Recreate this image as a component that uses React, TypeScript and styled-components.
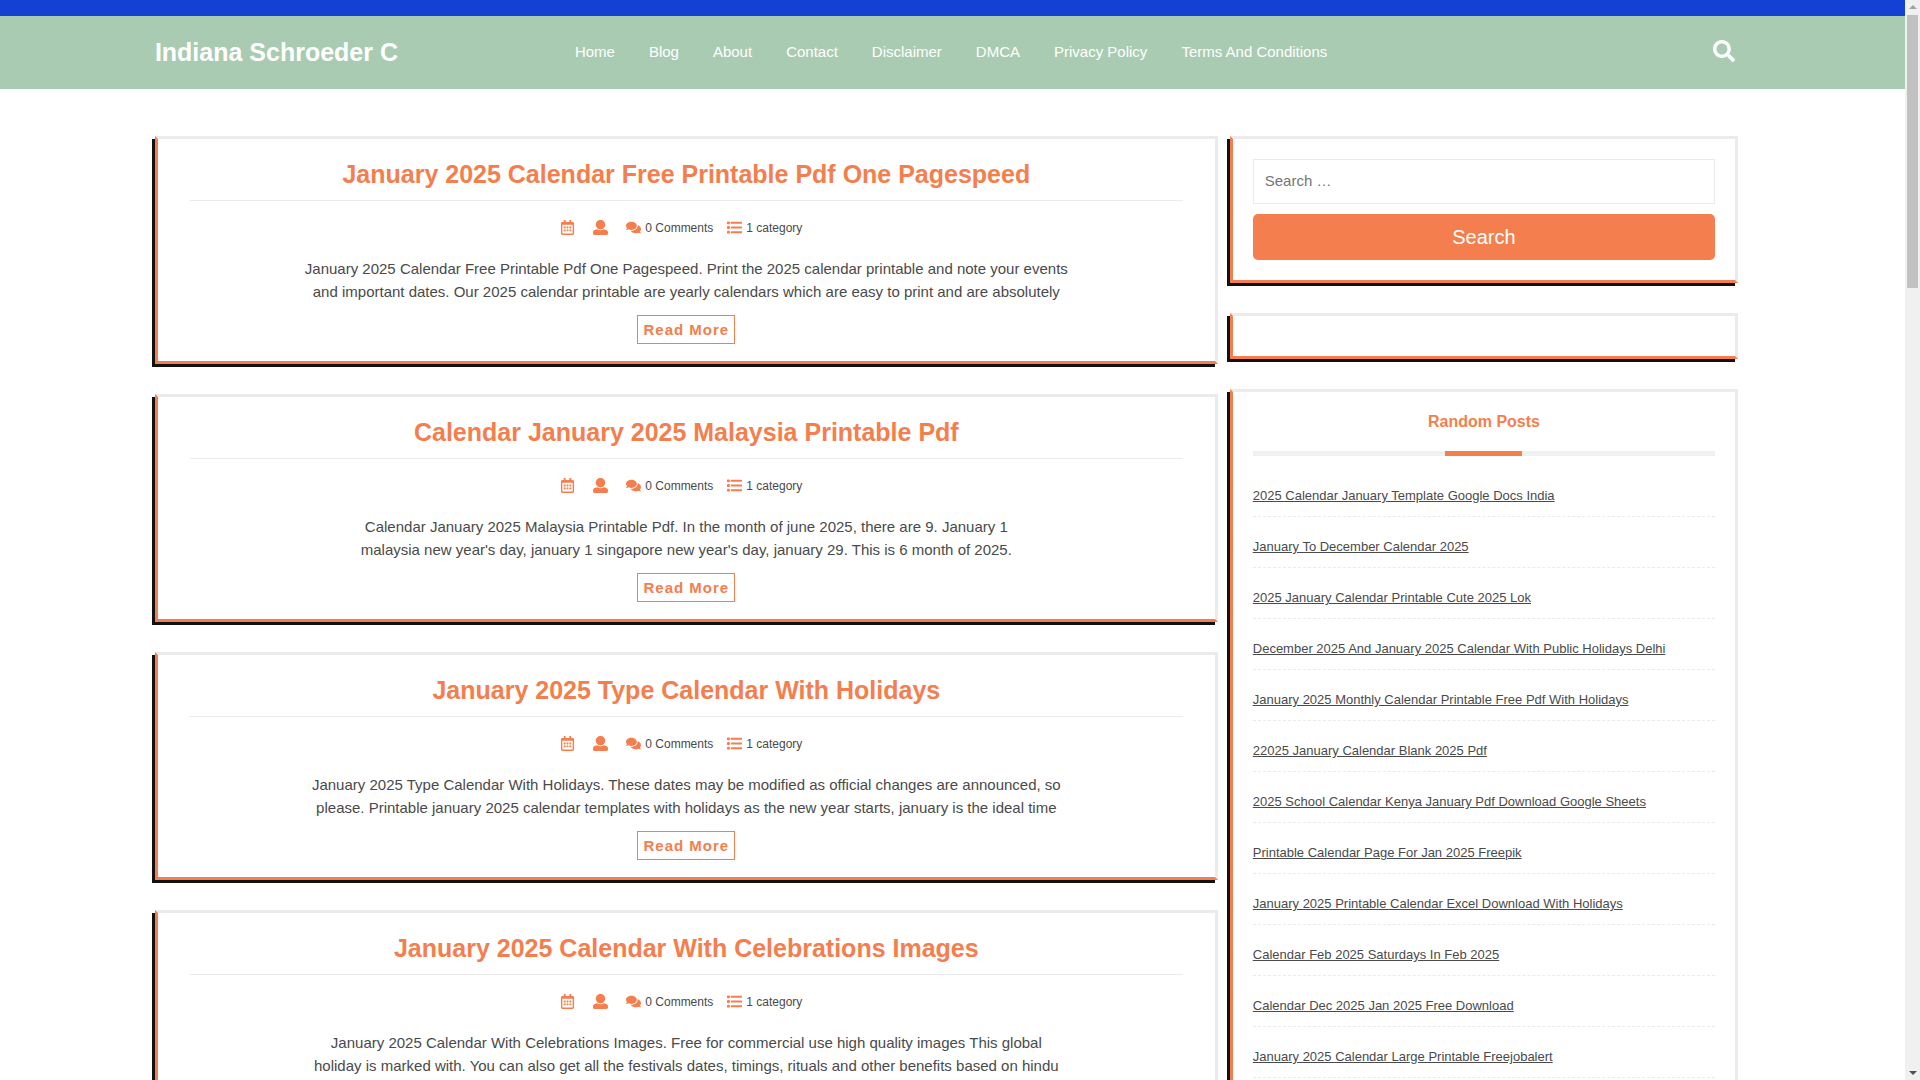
import React from "react";
import styled, { createGlobalStyle } from "styled-components";
import { FaRegCalendarAlt, FaComments, FaSearch } from "react-icons/fa";

const orange = "#f47e4d";
const ink = "#4a4a4a";
const line = "#ebebeb";

const GlobalStyle = createGlobalStyle`
  *, *::before, *::after { box-sizing: border-box; }
  body {
    margin: 0;
    background: #ffffff;
    color: ${ink};
    font: 15px/1.5 "Liberation Sans", Arial, sans-serif;
  }
  h1, h2, h3, p, ul { margin: 0; padding: 0; }
  ul { list-style: none; }
`;

const Shell = styled.div`
  display: grid;
  grid-template-columns: minmax(0, 1fr) 15px;
  height: 100vh;
  overflow: hidden;
`;

const Page = styled.div`
  overflow: hidden;
`;

const TopBar = styled.div`
  height: 16px;
  background: #1440d4;
`;

const Container = styled.div`
  width: 85%;
  margin: 0 auto;
  padding: 0 24px 0 12px;
`;

const Header = styled.header`
  background: #a9cbb2;
`;

const HeaderRow = styled(Container)`
  display: grid;
  grid-template-columns: 420px 1fr auto;
  align-items: center;
  height: 73px;
`;

const SiteTitle = styled.h1`
  padding-bottom: 2px;
  font-size: 25px;
  line-height: 38px;
`;

const SiteLink = styled.a`
  color: #ffffff;
  text-decoration: none;
`;

const NavList = styled.ul`
  display: flex;
  gap: 34px;
`;

const NavLink = styled.a`
  color: #ffffff;
  font-size: 15px;
  text-decoration: none;
`;

const SearchToggle = styled.button`
  display: flex;
  padding: 0 3px 4px;
  border: 0;
  background: none;
  color: #ffffff;
  font-size: 22px;
  cursor: pointer;
`;

const Columns = styled(Container)`
  display: grid;
  grid-template-columns: minmax(0, 23fr) minmax(0, 11fr);
  gap: 12px;
  align-items: start;
  padding-top: 47px;
`;

const Stack = styled.div`
  display: grid;
  gap: 30px;
`;

const Card = styled.section`
  border: 3px solid ${line};
  border-left-color: ${orange};
  border-bottom-color: ${orange};
  box-shadow: -3px 3px #111111;
`;

const PostCard = styled(Card).attrs({ as: "article" })`
  padding: 16px 32px 17px;
  text-align: center;
`;

const PostTitle = styled.h2`
  padding-bottom: 7px;
  border-bottom: 1px solid ${line};
  font-size: 25px;
  line-height: 38px;
`;

const PostLink = styled.a`
  color: ${orange};
  text-decoration: none;
`;

const Meta = styled.div`
  display: flex;
  justify-content: center;
  align-items: center;
  gap: 14px;
  margin-top: 16px;
  padding-right: 10px;
  height: 22px;
  font-size: 12px;
`;

const MetaItem = styled.span<{ $bare?: boolean }>`
  display: flex;
  align-items: center;
  gap: 4px;
  padding-right: ${(p) => (p.$bare ? "4px" : "0")};

  svg {
    margin-bottom: 2px;
    color: ${orange};
    font-size: 15px;
  }
`;

const Excerpt = styled.p`
  margin-top: 19px;
`;

const ReadMore = styled.a`
  display: inline-block;
  margin-top: 12px;
  padding: 0 5px;
  border: 1px solid ${orange};
  color: ${orange};
  font-weight: bold;
  line-height: 27px;
  letter-spacing: 1px;
  text-decoration: none;
  vertical-align: top;
`;

const Widget = styled(Card)`
  padding: 20px;
`;

const SearchForm = styled.form`
  display: grid;
  gap: 10px;
`;

const SearchInput = styled.input`
  width: 100%;
  height: 45px;
  padding: 0 11px 2px;
  border: 1px solid ${line};
  background: #ffffff;
  color: ${ink};
  font: inherit;

  &::placeholder { color: #757575; }
`;

const SearchButton = styled.button`
  height: 46px;
  border: 0;
  border-radius: 5px;
  background: ${orange};
  color: #ffffff;
  font: 20px "Liberation Sans", Arial, sans-serif;
  cursor: pointer;
`;

const WidgetTitle = styled.h3`
  color: ${orange};
  font-size: 16px;
  line-height: 19px;
  text-align: center;

  &::after {
    content: "";
    display: block;
    height: 5px;
    margin-top: 20px;
    background: linear-gradient(${orange}, ${orange}) center / calc(100% / 6) 100% no-repeat #f1f1f1;
  }
`;

const PostList = styled.ul`
  padding-top: 10px;
`;

const PostListItem = styled.li`
  padding: 20px 0 10px;
  border-bottom: 1px dashed ${line};
  font-size: 13px;
  line-height: 20px;
`;

const ListLink = styled.a`
  color: ${ink};
`;

const ScrollTrack = styled.div`
  display: flex;
  flex-direction: column;
  align-items: center;
  padding: 5px 2px;
  background: #f0f0f0;
`;

const ScrollArrow = styled.span<{ $down?: boolean }>`
  border: 4px solid transparent;
  border-width: ${(p) => (p.$down ? "4px 4px 0" : "0 4px 4px")};
  border-top-color: ${(p) => (p.$down ? "#505050" : "transparent")};
  border-bottom-color: ${(p) => (p.$down ? "transparent" : "#a3a3a3")};
  margin-top: ${(p) => (p.$down ? "auto" : "0")};
`;

const ScrollThumb = styled.div`
  width: 11px;
  height: 273px;
  margin-top: 6px;
  background: #c1c1c1;
`;

const navItems = ["Home", "Blog", "About", "Contact", "Disclaimer", "DMCA", "Privacy Policy", "Terms And Conditions"];

const posts = [
  {
    title: "January 2025 Calendar Free Printable Pdf One Pagespeed",
    lines: [
      "January 2025 Calendar Free Printable Pdf One Pagespeed. Print the 2025 calendar printable and note your events",
      "and important dates. Our 2025 calendar printable are yearly calendars which are easy to print and are absolutely",
    ],
  },
  {
    title: "Calendar January 2025 Malaysia Printable Pdf",
    lines: [
      "Calendar January 2025 Malaysia Printable Pdf. In the month of june 2025, there are 9. January 1",
      "malaysia new year's day, january 1 singapore new year's day, january 29. This is 6 month of 2025.",
    ],
  },
  {
    title: "January 2025 Type Calendar With Holidays",
    lines: [
      "January 2025 Type Calendar With Holidays. These dates may be modified as official changes are announced, so",
      "please. Printable january 2025 calendar templates with holidays as the new year starts, january is the ideal time",
    ],
  },
  {
    title: "January 2025 Calendar With Celebrations Images",
    lines: [
      "January 2025 Calendar With Celebrations Images. Free for commercial use high quality images This global",
      "holiday is marked with. You can also get all the festivals dates, timings, rituals and other benefits based on hindu",
    ],
  },
];

const randomPosts = [
  "2025 Calendar January Template Google Docs India",
  "January To December Calendar 2025",
  "2025 January Calendar Printable Cute 2025 Lok",
  "December 2025 And January 2025 Calendar With Public Holidays Delhi",
  "January 2025 Monthly Calendar Printable Free Pdf With Holidays",
  "22025 January Calendar Blank 2025 Pdf",
  "2025 School Calendar Kenya January Pdf Download Google Sheets",
  "Printable Calendar Page For Jan 2025 Freepik",
  "January 2025 Printable Calendar Excel Download With Holidays",
  "Calendar Feb 2025 Saturdays In Feb 2025",
  "Calendar Dec 2025 Jan 2025 Free Download",
  "January 2025 Calendar Large Printable Freejobalert",
];

const UserIcon = () => (
  <svg viewBox="0 0 512 512" width="1em" height="1em" fill="currentColor" aria-hidden="true">
    <path d="M256 0c88.366 0 160 71.634 160 160s-71.634 160-160 160S96 248.366 96 160 167.634 0 256 0zm183.283 333.821l-71.313-17.828c-74.923 53.89-165.738 41.864-223.94 0l-71.313 17.828C29.981 344.505 0 382.903 0 426.955V464c0 26.51 21.49 48 48 48h416c26.51 0 48-21.49 48-48v-37.045c0-44.052-29.981-82.45-72.717-93.134z" />
  </svg>
);

const ListIcon = () => (
  <svg viewBox="0 0 512 512" width="1em" height="1em" fill="currentColor" aria-hidden="true">
    {[96, 256, 416].map((y) => (
      <React.Fragment key={y}>
        <rect x="0" y={y - 48} width="96" height="96" rx="16" />
        <rect x="128" y={y - 36} width="384" height="72" rx="16" />
      </React.Fragment>
    ))}
  </svg>
);

function Post({ title, lines }: { title: string; lines: string[] }) {
  return (
    <PostCard>
      <PostTitle><PostLink href="#">{title}</PostLink></PostTitle>
      <Meta>
        <MetaItem $bare><FaRegCalendarAlt /></MetaItem>
        <MetaItem $bare><UserIcon /></MetaItem>
        <MetaItem><FaComments />0 Comments</MetaItem>
        <MetaItem><ListIcon />1 category</MetaItem>
      </Meta>
      <Excerpt>{lines[0]}<br />{lines[1]}</Excerpt>
      <ReadMore href="#">Read More</ReadMore>
    </PostCard>
  );
}

export default function App() {
  return (
    <Shell>
      <GlobalStyle />
      <Page>
        <TopBar />
        <Header>
          <HeaderRow>
            <SiteTitle><SiteLink href="#">Indiana Schroeder C</SiteLink></SiteTitle>
            <nav>
              <NavList>
                {navItems.map((item) => (
                  <li key={item}><NavLink href="#">{item}</NavLink></li>
                ))}
              </NavList>
            </nav>
            <SearchToggle type="button" aria-label="Open search"><FaSearch /></SearchToggle>
          </HeaderRow>
        </Header>
        <Columns>
          <Stack as="main">
            {posts.map((post) => <Post key={post.title} {...post} />)}
          </Stack>
          <Stack as="aside">
            <Widget>
              <SearchForm role="search" onSubmit={(e) => e.preventDefault()}>
                <SearchInput type="search" aria-label="Search for" placeholder="Search …" />
                <SearchButton type="submit">Search</SearchButton>
              </SearchForm>
            </Widget>
            <Widget />
            <Widget>
              <WidgetTitle>Random Posts</WidgetTitle>
              <PostList>
                {randomPosts.map((post) => (
                  <PostListItem key={post}><ListLink href="#">{post}</ListLink></PostListItem>
                ))}
              </PostList>
            </Widget>
          </Stack>
        </Columns>
      </Page>
      <ScrollTrack aria-hidden="true">
        <ScrollArrow />
        <ScrollThumb />
        <ScrollArrow $down />
      </ScrollTrack>
    </Shell>
  );
}
